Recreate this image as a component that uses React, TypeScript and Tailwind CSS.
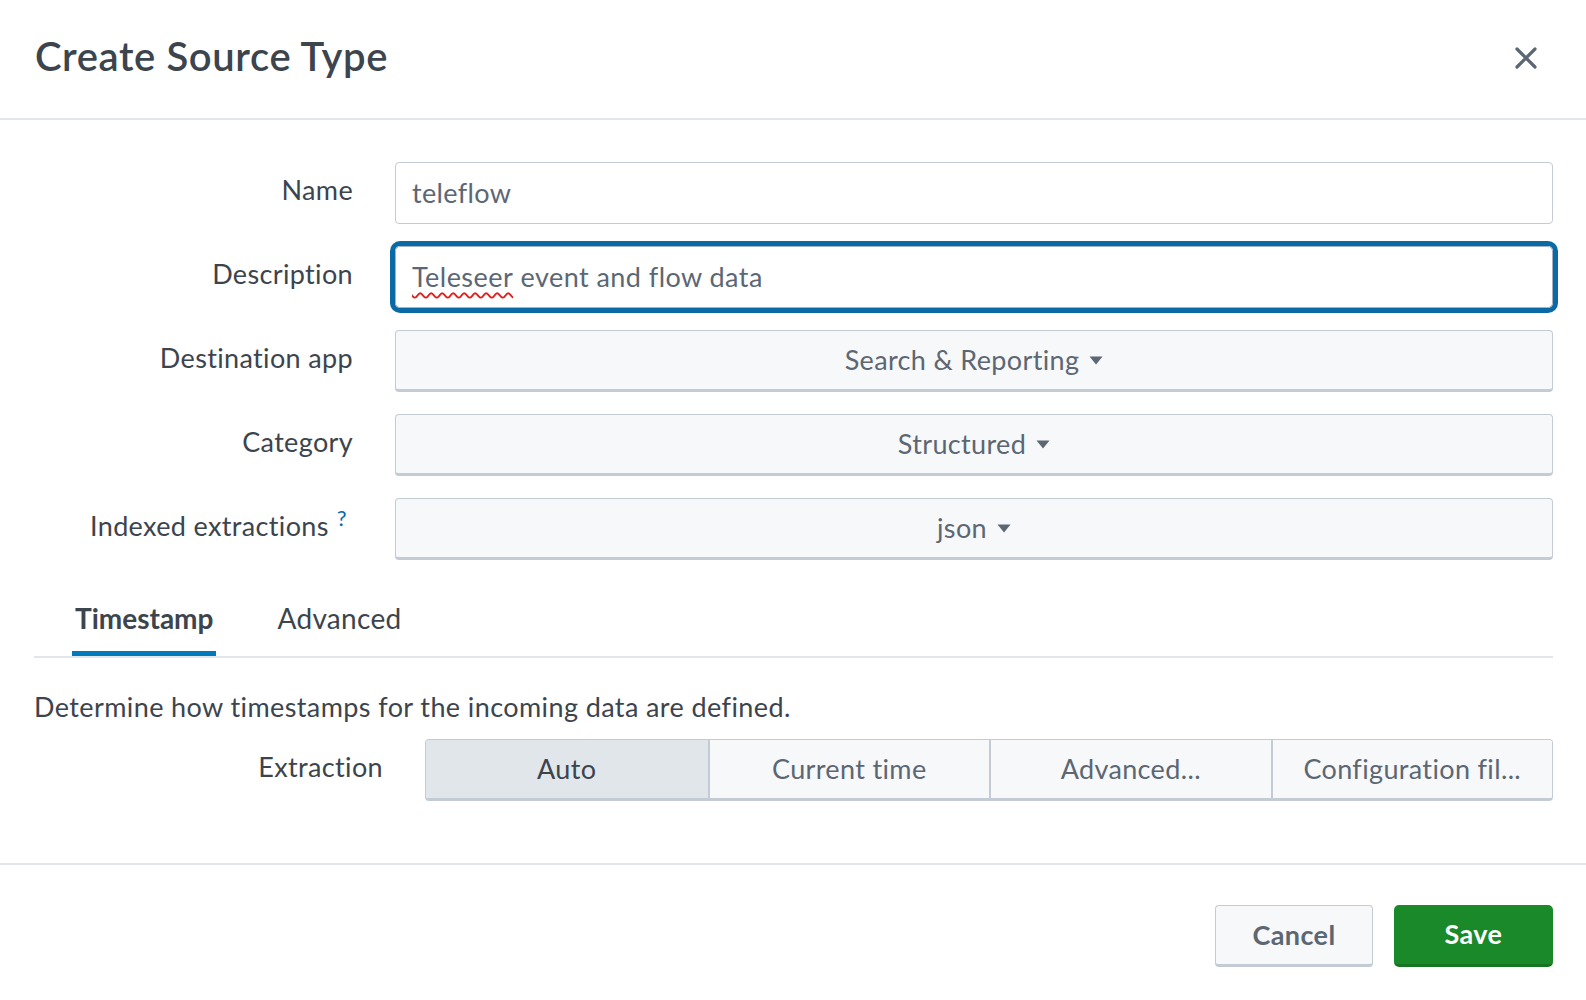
import React from "react";

function Caret() {
  return (
    <svg width="14" height="9" viewBox="0 0 14 9" className="shrink-0">
      <path d="M0.5 0.5 H13.5 L7 8.5 Z" fill="#5c6773" />
    </svg>
  );
}

function Label({ children, width = "w-[319px]" }: { children: React.ReactNode; width?: string }) {
  return (
    <div className={`${width} shrink-0 text-right pt-[13px] text-[27px] tracking-[0.35px] leading-[30px] text-[#3c444d]`}>
      {children}
    </div>
  );
}

function Dropdown({ value }: { value: string }) {
  return (
    <div className="flex-1 h-[62px] bg-[#f7f8fa] border border-b-[3px] border-[#c3cbd4] rounded-[4px] flex items-center justify-center gap-[10px] text-[27px] tracking-[0.35px] text-[#5c6773]">
      <span>{value}</span>
      <Caret />
    </div>
  );
}

export default function App() {
  return (
    <div className="w-[1586px] h-[1000px] bg-white font-[Lato,sans-serif] text-[#3c444d]">
      {/* Header */}
      <div className="h-[120px] flex items-center justify-between pl-[35px] pr-[49px] pb-[6px] border-b-2 border-[#e1e6eb]">
        <h1 className="text-[40px] tracking-[0.6px] font-semibold text-[#3c444d] leading-none">Create Source Type</h1>
        <svg width="22" height="22" viewBox="0 0 22 22" className="mt-[4px]">
          <path d="M2 2 L20 20 M20 2 L2 20" stroke="#5c6773" strokeWidth="3.2" strokeLinecap="round" />
        </svg>
      </div>

      {/* Body */}
      <div className="pt-[42px] pl-[34px] pr-[33px] pb-[62px]">
        <div className="flex flex-col gap-[22px]">
          <div className="flex gap-[42px]">
            <Label>Name</Label>
            <div className="flex-1 h-[62px] border border-[#c3cbd4] rounded-[4px] flex items-center px-[16px] text-[27px] tracking-[0.35px] text-[#5c6773]">
              teleflow
            </div>
          </div>
          <div className="flex gap-[42px]">
            <Label>Description</Label>
            <div className="flex-1 h-[62px] border border-[#9fb3c4] rounded-[5px] shadow-[0_0_0_5px_#0b6aa6] flex items-center px-[16px] text-[27px] tracking-[0.45px] text-[#5c6773]">
              <span className="underline decoration-wavy decoration-[#e0201c] decoration-[1.5px] underline-offset-[5px]">Teleseer</span>
              <span>&nbsp;event and flow data</span>
            </div>
          </div>
          <div className="flex gap-[42px]">
            <Label>Destination app</Label>
            <Dropdown value="Search & Reporting" />
          </div>
          <div className="flex gap-[42px]">
            <Label>Category</Label>
            <Dropdown value="Structured" />
          </div>
          <div className="flex gap-[42px]">
            <Label>
              Indexed extractions
              <sup className="text-[22px] text-[#0b6aa6] ml-[8px] mr-[6px] relative top-[-10px]">?</sup>
            </Label>
            <Dropdown value="json" />
          </div>
        </div>

        {/* Tabs */}
        <div className="mt-[41px] flex gap-[58px] pl-[38px] border-b-2 border-[#e1e6eb]">
          <div className="px-[3px] pb-[16px] border-b-[5px] border-[#007abd] text-[28px] leading-[34px] font-bold text-[#3c444d]">
            Timestamp
          </div>
          <div className="px-[3px] pb-[16px] border-b-[5px] border-transparent text-[28px] tracking-[0.3px] leading-[34px] text-[#3c444d]">
            Advanced
          </div>
        </div>

        <p className="mt-[32px] text-[27px] tracking-[0.4px] leading-[34px] text-[#3c444d]">
          Determine how timestamps for the incoming data are defined.
        </p>

        <div className="mt-[15px] flex gap-[42px]">
          <Label width="w-[349px]">Extraction</Label>
          <div className="flex-1 h-[62px] grid grid-cols-4 border border-b-[3px] border-[#c3cbd4] rounded-[4px] overflow-hidden text-[27px] tracking-[0.35px]">
            <div className="bg-[#e1e6eb] flex items-center justify-center text-[#3c444d]">Auto</div>
            <div className="bg-[#f7f8fa] border-l-2 border-[#c3cbd4] flex items-center justify-center text-[#5c6773]">Current time</div>
            <div className="bg-[#f7f8fa] border-l-2 border-[#c3cbd4] flex items-center justify-center text-[#5c6773]">Advanced...</div>
            <div className="bg-[#f7f8fa] border-l-2 border-[#c3cbd4] flex items-center justify-center text-[#5c6773]">Configuration fil...</div>
          </div>
        </div>
      </div>

      {/* Footer */}
      <div className="border-t-2 border-[#e1e6eb] pt-[40px] pr-[33px] flex justify-end gap-[21px]">
        <div className="w-[158px] h-[62px] bg-[#f7f8fa] border border-b-[3px] border-[#c3cbd4] rounded-[4px] flex items-center justify-center text-[27px] tracking-[0.4px] font-bold text-[#5c6773]">
          Cancel
        </div>
        <div className="w-[159px] h-[62px] bg-[#1a8929] border-b-[3px] border-[#15761f] rounded-[5px] flex items-center justify-center text-[27px] tracking-[0.4px] font-bold text-white">
          Save
        </div>
      </div>
    </div>
  );
}
